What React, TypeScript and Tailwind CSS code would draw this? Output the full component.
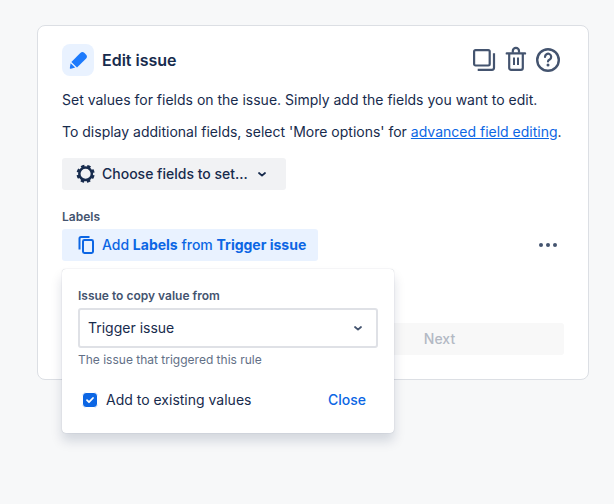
import { useState } from 'react';

const PencilIcon = () => (
  <svg width="32" height="32" viewBox="0 0 32 32" fill="#1d7afc" aria-hidden="true">
    <path d="M9.400 17.900 18.300 9.100a3 3 0 0 1 4.200 0l1.400 1.400a3 3 0 0 1 0 4.200l-8.900 8.700z" />
    <path d="M8.600 19.300 13.200 23.600 9 24.700a.9.9 0 0 1-1.100-1.100z" />
  </svg>
);

const CopyIcon = () => (
  <svg width="24" height="24" viewBox="0 0 24 24" fill="none" stroke="currentColor" strokeWidth="2.2" aria-hidden="true">
    <rect x="2.1" y="2.1" width="15.6" height="15.4" rx="1.4" />
    <path d="M22 5.2v14.6a2 2 0 0 1-2 2H5.700" />
  </svg>
);

const TrashIcon = () => (
  <svg className="overflow-visible" width="24" height="24" viewBox="0 0 24 24" fill="none" stroke="currentColor" strokeWidth="2.2" aria-hidden="true">
    <path d="M2.800 5.400h18.200" strokeWidth="2.400" strokeLinecap="round" />
    <path d="M8.800 4.800V3a3.100 3.100 0 0 1 6.200 0v1.800" />
    <path d="M5.200 6v13.900a1.900 1.900 0 0 0 1.900 1.900h9.800a1.900 1.900 0 0 0 1.900-1.900V6" />
    <path d="M10 9.400v7.600M14 9.400v7.600" strokeWidth="2" />
  </svg>
);

const HelpIcon = () => (
  <svg width="24" height="24" viewBox="0 0 24 24" fill="none" stroke="currentColor" strokeWidth="2.2" aria-hidden="true">
    <circle cx="12" cy="12" r="10.8" strokeWidth="2.4" />
    <path d="M9 8.900a3.100 3.100 0 1 1 4.700 2.600c-1.100.6-1.700 1.100-1.700 2" strokeLinecap="round" />
    <circle cx="12" cy="16.900" r="1.500" fill="currentColor" stroke="none" />
  </svg>
);

const GearIcon = () => (
  <svg width="24" height="24" viewBox="0 0 24 24" fill="none" stroke="currentColor" aria-hidden="true">
    <circle cx="11.600" cy="11.800" r="6.300" strokeWidth="2.500" />
    <circle cx="11.600" cy="11.800" r="7.900" strokeWidth="2.400" strokeDasharray="3.4 2.804" strokeDashoffset="-1.4" />
  </svg>
);

const DuplicateIcon = () => (
  <svg width="24" height="24" viewBox="0 0 24 24" fill="none" stroke="currentColor" strokeWidth="2" aria-hidden="true">
    <path d="M5.500 16.500V5.600A1.600 1.600 0 0 1 7.100 4H15.500" />
    <rect x="9" y="7" width="10" height="13" rx="1.4" />
  </svg>
);

const ChevronIcon = ({ className }: { className?: string }) => (
  <svg className={className} width="16" height="16" viewBox="0 0 16 16" fill="none" stroke="currentColor" strokeWidth="1.8" strokeLinecap="round" strokeLinejoin="round" aria-hidden="true">
    <path d="m5 7 3 2.600L11 7" />
  </svg>
);

const CopyFromPopup = ({ onClose }: { onClose: () => void }) => {
  const [append, setAppend] = useState(true);

  return (
    <div className="absolute top-full left-0 z-10 mt-2 w-[332px] rounded bg-white px-4 pt-[19px] pb-[17px] shadow-[0_8px_12px_rgba(9,30,66,0.15),0_0_1px_rgba(9,30,66,0.31)]">
      <label htmlFor="source" className="block text-xs leading-4 font-semibold text-[#44546f]">
        Issue to copy value from
      </label>
      <div className="mt-1 grid items-center">
        <select
          id="source"
          className="col-start-1 row-start-1 h-10 w-full appearance-none rounded-[3px] border-2 border-[#dfe1e6] bg-white px-2 text-sm"
        >
          <option>Trigger issue</option>
        </select>
        <ChevronIcon className="pointer-events-none col-start-1 row-start-1 mr-3 justify-self-end text-[#44546f]" />
      </div>
      <p className="mt-1 text-xs leading-4 text-[#626f86]">The issue that triggered this rule</p>
      <div className="mt-4 flex items-center justify-between">
        <label className="flex items-center gap-2 pl-1 text-sm">
          <span className="grid items-center justify-items-center">
            <input
              type="checkbox"
              checked={append}
              onChange={(e) => setAppend(e.target.checked)}
              className="col-start-1 row-start-1 size-4 appearance-none rounded-[4px] border border-white bg-white checked:bg-[#0c66e4]"
            />
            {append && (
              <svg className="pointer-events-none col-start-1 row-start-1" width="14" height="14" viewBox="0 0 14 14" fill="none" stroke="white" strokeWidth="1.8" strokeLinecap="round" strokeLinejoin="round" aria-hidden="true">
                <path d="m4 7.200 2 2 4-4.200" />
              </svg>
            )}
          </span>
          Add to existing values
        </label>
        <button type="button" onClick={onClose} className="h-8 px-3 text-sm font-medium text-[#0c66e4]">
          Close
        </button>
      </div>
    </div>
  );
};

const App = () => {
  const [open, setOpen] = useState(true);

  return (
    <div className="min-h-screen bg-[#f7f8f9] py-[25px] pr-[25px] pl-[37px] font-['Inter',sans-serif] text-[#172b4d]">
      <main className="rounded-lg border border-[#dcdfe4] bg-white px-6 pt-[18px] pb-6">
        <header className="flex items-center justify-between">
          <div className="flex items-center gap-2">
            <span className="rounded-lg bg-[#e9f2ff]">
              <PencilIcon />
            </span>
            <h1 className="text-base font-semibold">Edit issue</h1>
          </div>
          <div className="flex items-center gap-2 pr-1 text-[#44546f]">
            <button type="button" aria-label="Duplicate"><CopyIcon /></button>
            <button type="button" aria-label="Delete"><TrashIcon /></button>
            <button type="button" aria-label="Help"><HelpIcon /></button>
          </div>
        </header>

        <p className="mt-[14px] text-sm">
          Set values for fields on the issue. Simply add the fields you want to edit.
        </p>
        <p className="mt-3 text-sm">
          To display additional fields, select 'More options' for{' '}
          <a href="#" className="text-[#0c66e4] underline">advanced field editing</a>.
        </p>

        <button type="button" className="mt-4 flex h-8 items-center rounded-[3px] bg-[#f1f2f4] pr-4 pl-3 text-sm font-medium">
          <GearIcon />
          <span className="mr-1.5 ml-1">Choose fields to set...</span>
          <ChevronIcon />
        </button>

        <h2 className="mt-[19px] text-xs leading-4 font-semibold text-[#44546f]">Labels</h2>
        <div className="mt-1 flex items-center justify-between">
          <div className="relative">
            <button
              type="button"
              onClick={() => setOpen(!open)}
              className="flex h-8 items-center gap-1 rounded-[3px] bg-[#e9f2ff] px-3 text-sm text-[#0c66e4]"
            >
              <DuplicateIcon />
              <span className="font-medium">
                Add <b>Labels</b> from <b>Trigger issue</b>
              </span>
            </button>
            {open && <CopyFromPopup onClose={() => setOpen(false)} />}
          </div>
          <button type="button" aria-label="More" className="pr-1 text-[#44546f]">
            <svg width="24" height="24" viewBox="0 0 24 24" fill="currentColor" aria-hidden="true">
              <circle cx="5" cy="12" r="2" />
              <circle cx="12" cy="12" r="2" />
              <circle cx="19" cy="12" r="2" />
            </svg>
          </button>
        </div>

        <div className="mt-[62px] grid grid-cols-2 gap-1">
          <button type="button" disabled className="col-start-2 h-8 rounded-[3px] bg-[#f8f8f8] text-sm font-medium text-[#b3b9c4]">
            Next
          </button>
        </div>
      </main>
    </div>
  );
};

export default App;
